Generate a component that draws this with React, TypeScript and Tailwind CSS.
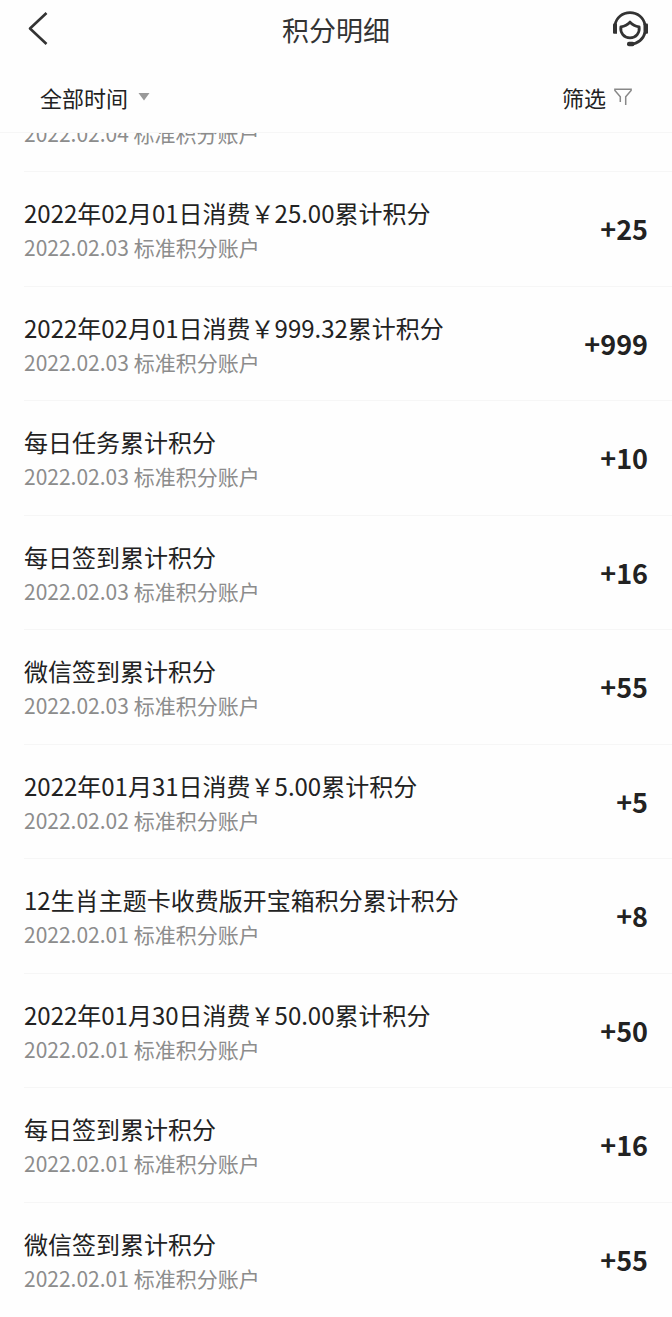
import { useState } from 'react'

type PointRecord = {
  title: string
  date: string
  points: number
}

const records: PointRecord[] = [
  { title: '2022年02月01日消费￥25.00累计积分', date: '2022.02.03', points: 25 },
  { title: '2022年02月01日消费￥999.32累计积分', date: '2022.02.03', points: 999 },
  { title: '每日任务累计积分', date: '2022.02.03', points: 10 },
  { title: '每日签到累计积分', date: '2022.02.03', points: 16 },
  { title: '微信签到累计积分', date: '2022.02.03', points: 55 },
  { title: '2022年01月31日消费￥5.00累计积分', date: '2022.02.02', points: 5 },
  { title: '12生肖主题卡收费版开宝箱积分累计积分', date: '2022.02.01', points: 8 },
  { title: '2022年01月30日消费￥50.00累计积分', date: '2022.02.01', points: 50 },
  { title: '每日签到累计积分', date: '2022.02.01', points: 16 },
  { title: '微信签到累计积分', date: '2022.02.01', points: 55 },
]

function BackIcon() {
  return (
    <svg width="20" height="34" viewBox="0 0 20 34" fill="none" stroke="#333" strokeWidth="2.6">
      <path d="M18.500 2 2 17.500 18.500 33" strokeLinejoin="round" />
    </svg>
  )
}

function ServiceIcon() {
  return (
    <svg width="36" height="36" viewBox="0 0 36 36" fill="none" stroke="#333" strokeWidth="2.800">
      <path d="M3 14C4.300 6.500 10.500 1.600 18 1.600S31.700 6.500 33 14" />
      <path d="M33 21.500C31.500 28 26 32.800 18.500 33.300" />
      <path
        d="M8.900 15.800c3.800-.5 7-2.300 9.100-4.700 2.100 2.400 5.300 4.200 9.100 4.700 1 6-3.100 11-9.100 11s-10.100-5-9.100-11Z"
        strokeLinejoin="round"
      />
      <path d="M1.500 12.500H5v10.300H2a1 1 0 0 1-1-1V13.500Z" fill="#333" stroke="none" />
      <path d="M31.500 12.500h3.500a1 1 0 0 1 1 1v8.300a1 1 0 0 1-1 1h-3.500Z" fill="#333" stroke="none" />
      <rect x="15" y="30.700" width="7.500" height="4.600" rx="2" fill="#333" stroke="none" />
    </svg>
  )
}

function FilterIcon() {
  return (
    <svg width="18" height="18" viewBox="0 0 18 18" fill="none" stroke="#888" strokeWidth="1.500">
      <path d="M6.300 14V8.800L.9 2.400V1.200h16.200v1.200l-5.400 6.400V17" />
    </svg>
  )
}

export default function App() {
  const [range, setRange] = useState('all')

  return (
    <div className="min-h-screen bg-[#fefefe] pb-4 font-['Noto_Sans_CJK_SC',sans-serif] text-[#222]">
      <header className="sticky top-0 z-10 border-b border-[#f6f6f6] bg-[#fefefe]">
        <div className="flex h-16 items-start justify-between px-6 pt-[11px]">
          <button type="button" aria-label="返回" className="flex w-9 pl-1">
            <BackIcon />
          </button>
          <h1 className="text-[27px] leading-[38px] text-[#333]">积分明细</h1>
          <button type="button" aria-label="客服" className="flex w-9">
            <ServiceIcon />
          </button>
        </div>

        <div className="flex h-[68px] items-center justify-between px-10 pb-[2px] text-[22px] leading-8">
          <div className="flex items-center">
            <select
              aria-label="时间范围"
              value={range}
              onChange={e => setRange(e.target.value)}
              className="w-[98px] appearance-none bg-transparent focus:outline-none"
            >
              <option value="all">全部时间</option>
            </select>
            <svg width="12" height="8" viewBox="0 0 12 8" fill="#999">
              <path d="M.5 0h11L6 7.500Z" />
            </svg>
          </div>
          <button type="button" className="flex items-center gap-2">
            筛选
            <FilterIcon />
          </button>
        </div>
      </header>

      {/* Tail of the previous record, partly under the header */}
      <div className="-mt-4 ml-6 border-b border-[#f6f6f6] pb-[22px]">
        <p className="text-[21px] leading-8 text-[#8c8c8c]">2022.02.04 标准积分账户</p>
      </div>

      <ul className="pl-6">
        {records.map((record, index) => (
          <li
            key={index}
            className="flex items-center justify-between border-b border-[#f6f6f6] pt-[23px] pr-6 pb-[23px] last:border-b-0 even:pb-[22px]"
          >
            <div>
              <h2 className="text-[24px] leading-9">{record.title}</h2>
              <p className="text-[21px] leading-8 text-[#8c8c8c]">{record.date} 标准积分账户</p>
            </div>
            <span className="text-[27px] leading-9 font-bold">+{record.points}</span>
          </li>
        ))}
      </ul>
    </div>
  )
}
